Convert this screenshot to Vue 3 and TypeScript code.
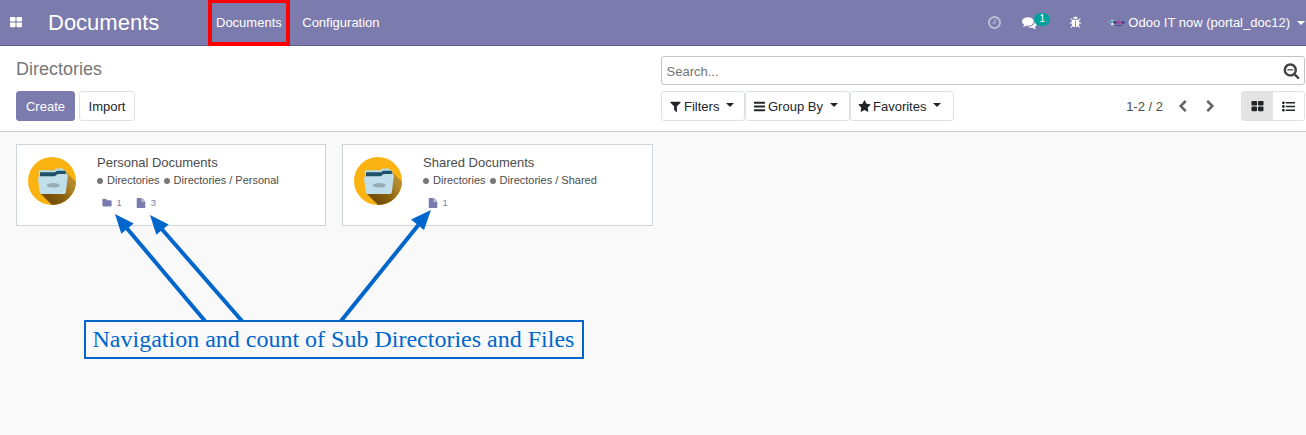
<script setup lang="ts">
import { computed, ref } from 'vue'

interface Directory {
  name: string
  tags: string[]
  folders: number
  files: number
}

const icons: Record<string, string> = {
  grid: 'M832 1024v384q0 52-38 90t-90 38h-512q-52 0-90-38t-38-90v-384q0-52 38-90t90-38h512q52 0 90 38t38 90zm0-768v384q0 52-38 90t-90 38h-512q-52 0-90-38t-38-90v-384q0-52 38-90t90-38h512q52 0 90 38t38 90zm896 768v384q0 52-38 90t-90 38h-512q-52 0-90-38t-38-90v-384q0-52 38-90t90-38h512q52 0 90 38t38 90zm0-768v384q0 52-38 90t-90 38h-512q-52 0-90-38t-38-90v-384q0-52 38-90t90-38h512q52 0 90 38t38 90z',
  clock: 'M1024 544v448q0 14-9 23t-23 9h-320q-14 0-23-9t-9-23v-64q0-14 9-23t23-9h224v-352q0-14 9-23t23-9h64q14 0 23 9t9 23zm416 352q0-148-73-273t-198-198-273-73-273 73-198 198-73 273 73 273 198 198 273 73 273-73 198-198 73-273zm224 0q0 209-103 385.5t-279.5 279.5-385.5 103-385.5-103-279.5-279.5-103-385.5 103-385.5 279.5-279.5 385.5-103 385.5 103 279.5 279.5 103 385.5z',
  comments: 'M1408 768q0 139-94 257t-256.5 186.5-353.5 68.5q-86 0-176-16-124 88-278 128-36 9-86 16h-3q-11 0-20.5-8t-11.5-21q-1-3-1-6.5t.5-6.5 2-6l2.5-5 3.5-5.5 4-5 4.5-5 4-4.500q5-6 23-25t26-29.500 22.500-29 25-38.500 20.500-44q-124-72-195-177t-71-224q0-139 94-257t256.5-186.5 353.5-68.5 353.5 68.5 256.5 186.5 94 257zm384 256q0 120-71 224.5t-195 176.5q10 24 20.5 44t25 38.5 22.5 29 26 29.5 23 25q1 1 4 4.5t4.5 5 4 5 3.5 5.5l2.5 5 2 6 .5 6.5-1 6.5q-3 14-13 22t-22 7q-50-7-86-16-154-40-278-128-90 16-176 16-271 0-472-132 58 4 88 4 161 0 309-45t264-129q125-92 192-212t67-254q0-77-23-152 129 71 204 178t75 230z',
  bug: 'M1696 960q0 26-19 45t-45 19h-224q0 171-67 290l208 209q19 19 19 45t-19 45q-18 19-45 19t-45-19l-198-197q-5 5-15 13t-42 28.5-65 36.5-82 29-97 13v-896h-128v896q-51 0-101.5-13.5t-87-33-66-39-43.5-32.5l-15-14-183 207q-20 21-48 21-24 0-43-16-19-18-20.5-44.5t15.5-46.5l202-227q-58-114-58-274h-224q-26 0-45-19t-19-45 19-45 45-19h224v-294l-173-173q-19-19-19-45t19-45 45-19 45 19l173 173h844l173-173q19-19 45-19t45 19 19 45-19 45l-173 173v294h224q26 0 45 19t19 45zm-480-576h-640q0-133 93.5-226.5t226.5-93.5 226.5 93.5 93.5 226.5z',
  searchMinus: 'M1088 800v64q0 13-9.5 22.5t-22.5 9.5h-576q-13 0-22.5-9.5t-9.5-22.5v-64q0-13 9.5-22.5t22.5-9.5h576q13 0 22.5 9.5t9.5 22.5zm128 32q0-185-131.5-316.5t-316.5-131.5-316.5 131.5-131.5 316.5 131.5 316.5 316.5 131.5 316.5-131.5 131.5-316.5zm512 832q0 53-37.5 90.5t-90.5 37.5q-54 0-90-38l-343-342q-179 124-399 124-143 0-273.5-55.5t-225-150-150-225-55.5-273.5 55.5-273.5 150-225 225-150 273.5-55.5 273.5 55.5 225 150 150 225 55.5 273.5q0 220-124 399l343 343q37 37 37 90z',
  filter: 'M1595 295q17 41-14 70l-493 493v742q0 42-39 59-13 5-25 5-27 0-45-19l-256-256q-19-19-19-45v-486l-493-493q-31-29-14-70 17-39 59-39h1280q42 0 59 39z',
  bars: 'M1664 1344v128q0 26-19 45t-45 19h-1408q-26 0-45-19t-19-45v-128q0-26 19-45t45-19h1408q26 0 45 19t19 45zm0-512v128q0 26-19 45t-45 19h-1408q-26 0-45-19t-19-45v-128q0-26 19-45t45-19h1408q26 0 45 19t19 45zm0-512v128q0 26-19 45t-45 19h-1408q-26 0-45-19t-19-45v-128q0-26 19-45t45-19h1408q26 0 45 19t19 45z',
  star: 'M1728 647q0 22-26 48l-363 354 86 500q1 7 1 20 0 21-10.5 35.5t-30.5 14.5q-19 0-40-12l-449-236-449 236q-22 12-40 12-21 0-31.5-14.5t-10.5-35.5q0-6 2-20l86-500-364-354q-25-27-25-48 0-37 56-46l502-73 225-455q19-41 49-41t49 41l225 455 502 73q56 9 56 46z',
  left: 'M1427 301l-531 531 531 531q19 19 19 45t-19 45l-166 166q-19 19-45 19t-45-19l-742-742q-19-19-19-45t19-45l742-742q19-19 45-19t45 19l166 166q19 19 19 45t-19 45z',
  right: 'M1363 877l-742 742q-19 19-45 19t-45-19l-166-166q-19-19-19-45t19-45l531-531-531-531q-19-19-19-45t19-45l166-166q19-19 45-19t45 19l742 742q19 19 19 45t-19 45z',
  list: 'M384 1408a192 192 0 1 1-384 0 192 192 0 0 1 384 0zm0-512a192 192 0 1 1-384 0 192 192 0 0 1 384 0zm0-512a192 192 0 1 1-384 0 192 192 0 0 1 384 0zM512 1312h1280v192h-1280zM512 800h1280v192h-1280zM512 288h1280v192h-1280z',
  folder: 'M1728 608v704q0 92-66 158t-158 66h-1216q-92 0-158-66t-66-158v-960q0-92 66-158t158-66h320q92 0 158 66t66 158v32h672q92 0 158 66t66 158z',
  file: 'M1152 512v-472q22 14 36 28l408 408q14 14 28 36h-472zm-128 32q0 40 28 68t68 28h544v1056q0 40-28 68t-68 28h-1344q-40 0-68-28t-28-68v-1600q0-40 28-68t68-28h800v544z',
}

const directories = ref<Directory[]>([
  { name: 'Personal Documents', tags: ['Directories', 'Directories / Personal'], folders: 1, files: 3 },
  { name: 'Shared Documents', tags: ['Directories', 'Directories / Shared'], folders: 0, files: 1 },
])

const pager = computed(() => `1-${directories.value.length} / ${directories.value.length}`)

const searchMenus = [
  { label: 'Filters', icon: 'filter', cls: 'filters' },
  { label: 'Group By', icon: 'bars', cls: 'group' },
  { label: 'Favorites', icon: 'star', cls: 'favorites' },
]

const arrows = [
  { line: 'M205 321L125 226', head: '115,214 133.7,223.4 121.3,233.8' },
  { line: 'M242 321L160 227', head: '150,215 168.7,224.4 156.3,234.8' },
  { line: 'M341 321L420 223', head: '431,210 411,219.5 424,230' },
]
</script>

<template>
  <div class="app">
    <header class="navbar">
      <svg class="apps" viewBox="0 0 1792 1792"><path :d="icons.grid" /></svg>
      <span class="brand">Documents</span>
      <nav class="menu">
        <a class="entry marked">Documents</a>
        <a class="entry">Configuration</a>
      </nav>
      <div class="systray">
        <svg class="ico clock" viewBox="0 0 1792 1792"><path :d="icons.clock" /></svg>
        <span class="messages">
          <svg class="ico comments" viewBox="0 0 1792 1792"><path :d="icons.comments" /></svg>
          <span class="badge">1</span>
        </span>
        <svg class="ico bug" viewBox="0 0 1792 1792"><path :d="icons.bug" /></svg>
        <svg class="avatar" viewBox="0 0 17 8">
          <path d="M1 3.5H16" stroke="#4b4396" stroke-width="1" />
          <circle cx="1.5" cy="3.3" r="1.1" fill="#5cc4c0" />
          <circle cx="4.3" cy="1.6" r="1.4" fill="#66c9bb" />
          <circle cx="4.3" cy="5" r="1.4" fill="#d3f1ea" />
          <circle cx="7" cy="3.5" r="1.2" fill="#30368c" />
          <circle cx="9.7" cy="3.3" r="1.5" fill="#9d3f91" />
          <circle cx="12.5" cy="3.6" r="1.4" fill="#ad477f" />
          <circle cx="15.3" cy="3.5" r="1.2" fill="#343784" />
          <path d="M8 6.4H14" stroke="#4c438b" stroke-width="1" />
        </svg>
        <span class="user">Odoo IT now (portal_doc12)</span>
        <i class="caret"></i>
      </div>
    </header>

    <section class="panel">
      <div class="left">
        <h1 class="title">Directories</h1>
        <div class="actions">
          <button class="btn primary">Create</button>
          <button class="btn import">Import</button>
        </div>
      </div>
      <div class="right">
        <div class="search">
          <span>Search...</span>
          <svg class="lens" viewBox="0 0 1792 1792"><path :d="icons.searchMinus" /></svg>
        </div>
        <div class="tools">
          <button v-for="m in searchMenus" :key="m.label" class="btn drop" :class="m.cls">
            <svg class="ico" viewBox="0 0 1792 1792"><path :d="icons[m.icon]" /></svg>
            <span>{{ m.label }}</span>
            <i class="caret"></i>
          </button>
          <div class="pager">
            <span class="range">{{ pager }}</span>
            <svg class="ico prev" viewBox="0 0 1792 1792"><path :d="icons.left" /></svg>
            <svg class="ico next" viewBox="0 0 1792 1792"><path :d="icons.right" /></svg>
          </div>
          <div class="switch">
            <button class="view active"><svg class="ico" viewBox="0 0 1792 1792"><path :d="icons.grid" /></svg></button>
            <button class="view"><svg class="ico" viewBox="0 0 1792 1792"><path :d="icons.list" /></svg></button>
          </div>
        </div>
      </div>
    </section>

    <main class="kanban">
      <article v-for="(d, i) in directories" :key="d.name" class="card">
        <svg class="picture" viewBox="0 0 48 48">
          <defs>
            <linearGradient :id="`shade${i}`" gradientUnits="userSpaceOnUse" x1="26" y1="46" x2="46" y2="30">
              <stop offset="0" stop-color="#775006" />
              <stop offset="0.4" stop-color="#86600f" />
              <stop offset="1" stop-color="#b58a2c" />
            </linearGradient>
            <clipPath :id="`disc${i}`"><circle cx="24" cy="24" r="24" /></clipPath>
          </defs>
          <circle cx="24" cy="24" r="24" fill="#fbb312" />
          <path :clip-path="`url(#disc${i})`" d="M38 15L60 37V60H36L13 37Z" :fill="`url(#shade${i})`" />
          <path d="M10.500 15q0-1.700 1.700-1.700H27.300V12.800q.2-1.300 1.500-1.300h5.700q1.200 0 1.500 1.700h1.200q1.300 0 1.200 1.300L38 24H12Z" fill="#b7dce8" />
          <path d="M12 15.200H27l2-1.500H37.800V20H12Z" fill="#1f5266" />
          <path d="M10 21q-.1-1.800 1.700-1.800H26q1 0 1.800-.8l1-.8q.8-.6 2-.6h7.500q1.700 0 1.500 2l-1.900 16q-.2 2-2 2.100H13.800q-2 0-2.200-2z" fill="#c0dfea" />
          <ellipse cx="25.300" cy="28.300" rx="6.500" ry="2.300" fill="#98abb5" />
        </svg>
        <div class="details">
          <div class="name">{{ d.name }}</div>
          <div class="tags">
            <span v-for="t in d.tags" :key="t" class="tag"><i class="dot"></i>{{ t }}</span>
          </div>
          <div class="counts">
            <span v-if="d.folders" class="count">
              <svg viewBox="0 0 1792 1792"><path :d="icons.folder" /></svg>{{ d.folders }}
            </span>
            <span class="count file">
              <svg viewBox="0 0 1792 1792"><path :d="icons.file" /></svg>{{ d.files }}
            </span>
          </div>
        </div>
      </article>
    </main>

    <div class="redbox"></div>
    <svg class="arrows" viewBox="0 0 1306 435">
      <g v-for="a in arrows" :key="a.line">
        <path :d="a.line" />
        <polygon :points="a.head" />
      </g>
    </svg>
    <div class="note">Navigation and count of Sub Directories and Files</div>
  </div>
</template>

<style>
body {
  margin: 0;
}
</style>

<style scoped>
.app {
  position: relative;
  width: 1306px;
  height: 435px;
  overflow: hidden;
  display: flex;
  flex-direction: column;
  background: #f9f9f9;
  color: #4c4c4c;
  font: 13px/19px "Liberation Sans", Arial, sans-serif;
}
.app * {
  box-sizing: border-box;
}
svg {
  display: block;
  flex: none;
  fill: currentColor;
}
.ico {
  width: 13px;
  height: 13px;
}
.caret {
  border: 4px solid transparent;
  border-top-color: currentColor;
  border-bottom: 0;
}
.navbar {
  flex: none;
  display: flex;
  align-items: center;
  height: 46px;
  padding-left: 9px;
  background: #7c7bad;
  border-bottom: 1px solid #5f5e97;
  color: #fff;
}
.apps {
  width: 14px;
  height: 13px;
}
.brand {
  width: 153px;
  margin-left: 25px;
  font-size: 22px;
  line-height: 44px;
}
.menu {
  display: flex;
}
.entry {
  padding: 0 10px;
  line-height: 45px;
}
.marked {
  padding-left: 15px;
  padding-right: 10.5px;
}
.systray {
  display: flex;
  align-items: center;
  flex: 1;
  justify-content: flex-end;
}
.clock {
  width: 15px;
  height: 15px;
  opacity: 0.5;
}
.messages {
  display: flex;
  width: 29px;
  margin: 0 18px 0 20px;
}
.comments {
  width: 15px;
  height: 15px;
}
.badge {
  width: 16px;
  height: 13px;
  margin: -2px 0 0 -3px;
  border-radius: 7px;
  background: #00a09d;
  font-size: 10px;
  line-height: 12px;
  text-align: center;
}
.avatar {
  width: 17px;
  height: 8px;
  margin: 0 3px 0 26px;
}
.systray .caret {
  margin: 0 1px 0 7px;
}
.panel {
  flex: none;
  display: flex;
  justify-content: space-between;
  height: 86px;
  padding: 10px 1px 0 16px;
  background: #fff;
  border-bottom: 1px solid #cacaca;
}
.title {
  height: 35px;
  margin: 0;
  font-size: 18px;
  line-height: 26px;
  font-weight: 400;
  color: #777;
}
.actions {
  display: flex;
  gap: 4px;
}
.btn {
  height: 30px;
  padding: 0;
  border: 1px solid #dee2e6;
  border-radius: 3px;
  background: #fff;
  color: #212529;
  font: inherit;
}
.primary {
  width: 59px;
  background: #7c7bad;
  border-color: #7c7bad;
  color: #fff;
}
.import {
  width: 56px;
}
.right {
  width: 645px;
  padding-left: 0.5px;
}
.search {
  display: flex;
  align-items: center;
  justify-content: space-between;
  height: 29px;
  padding: 2px 4px 0 5px;
  border: 1px solid #c4c4c4;
  border-radius: 3px;
  color: #757575;
}
.lens {
  width: 17px;
  height: 17px;
  margin-top: -2px;
  color: #444;
}
.tools {
  display: flex;
  margin-top: 6px;
}
.drop {
  display: flex;
  align-items: center;
  padding-left: 7.5px;
}
.drop .caret {
  margin: -2px 0 0 7px;
}
.drop span {
  margin-left: 2px;
}
.filters {
  width: 84px;
}
.group {
  width: 105px;
}
.favorites {
  width: 104px;
}
.pager {
  flex: 1;
  display: flex;
  align-items: center;
  justify-content: flex-end;
}
.prev {
  margin-left: 13px;
  color: #666;
}
.next {
  margin: 0 24px 0 15px;
  color: #666;
}
.switch {
  display: flex;
  height: 30px;
  border: 1px solid #dee2e6;
  border-radius: 3px;
}
.view {
  display: flex;
  align-items: center;
  justify-content: center;
  width: 31px;
  padding: 0;
  border: 0;
  background: #fff;
  color: #212529;
}
.view.active {
  background: #e4e4e4;
}
.kanban {
  display: flex;
  gap: 16px;
  padding: 12px 16px;
}
.card {
  display: flex;
  width: 310px;
  height: 82px;
  padding: 9px 0 0 10.5px;
  background: #fff;
  border: 1px solid #ced4da;
}
.card + .card {
  width: 311px;
}
.picture {
  width: 48px;
  height: 48px;
  margin-top: 3px;
}
.details {
  margin-left: 21.5px;
}
.name {
  line-height: 18px;
}
.tags {
  display: flex;
  gap: 4px;
  font-size: 11px;
  line-height: 17px;
}
.tag {
  display: flex;
  align-items: center;
}
.dot {
  width: 6px;
  height: 6px;
  margin: 1px 4px 0 0;
  border-radius: 50%;
  background: #777;
}
.counts {
  display: flex;
  gap: 14.5px;
  padding: 5px 0 0 5px;
  color: #7c7bad;
  font-size: 9.5px;
  line-height: 18px;
}
.count {
  display: flex;
  align-items: center;
  gap: 4.5px;
}
.count svg {
  width: 10px;
  height: 10px;
}
.redbox {
  position: absolute;
  left: 208px;
  top: -1px;
  width: 82px;
  height: 47px;
  border: 4px solid #f00;
}
.arrows {
  position: absolute;
  left: 0;
  top: 0;
  width: 1306px;
  height: 435px;
}
.arrows path {
  fill: none;
  stroke: #0066cc;
  stroke-width: 4;
}
.arrows polygon {
  fill: #0066cc;
}
.note {
  position: absolute;
  left: 84px;
  top: 320px;
  width: 500px;
  height: 39px;
  padding-left: 6.5px;
  border: 2px solid #0066cc;
  background: #f9f9f9;
  color: #0066cc;
  font: 24px/35px "Liberation Serif", "Times New Roman", serif;
  white-space: nowrap;
}
</style>
